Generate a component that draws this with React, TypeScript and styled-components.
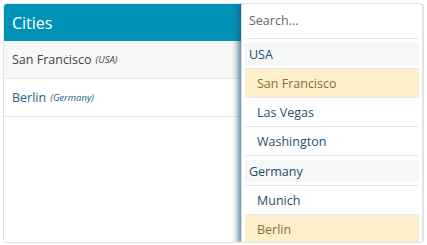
import React, { useState } from 'react';
import styled, { createGlobalStyle } from 'styled-components';

const GlobalStyle = createGlobalStyle`
    html, body {
        margin: 0;
        padding: 0;
        background: #ffffff;
        font-family: "Open Sans", "Noto Sans", sans-serif;
        overflow: hidden;
    }
`;

const Page = styled.div`
    width: 427px;
    height: 245px;
    padding: 3px 3px 4px 3px;
    box-sizing: border-box;
`;

const Card = styled.div`
    position: relative;
    height: 100%;
    border: 1px solid #dfe3e6;
    border-radius: 4px;
    overflow: hidden;
    background: #fff;
`;

const Header = styled.div`
    height: 37px;
    background: #0093b5;
    color: #fff;
    font-size: 16px;
    display: flex;
    align-items: center;
    padding: 0 8px;
`;

const Row = styled.div<{ $shaded?: boolean; $active?: boolean }>`
    height: 37px;
    display: flex;
    align-items: center;
    gap: 4px;
    padding: 0 8px;
    font-size: 12.5px;
    color: ${(p) => (p.$active ? '#236283' : '#444')};
    background: ${(p) => (p.$shaded ? '#f7f7f7' : '#fff')};
    border-bottom: 1px solid #e4e8ea;

    &:last-of-type {
        border-bottom: none;
    }
`;

const Country = styled.span`
    font-size: 9.5px;
    font-style: italic;
`;

const Dropdown = styled.div`
    position: absolute;
    top: -2px;
    right: 0;
    width: 182px;
    bottom: -4px;
    background: #fff;
    border: 1px solid #dfe3e6;
    border-radius: 4px;
    box-shadow: -4px 0 6px -1px rgba(20, 90, 130, 0.75);
    padding: 0 3px;
    box-sizing: border-box;
`;

const Search = styled.input`
    display: block;
    width: 100%;
    height: 36px;
    box-sizing: border-box;
    border: none;
    border-bottom: 1px solid #e4e8ea;
    outline: none;
    padding: 0 4px;
    font-family: inherit;
    font-size: 12.5px;
    color: #333;

    &::placeholder {
        color: #666;
    }
`;

const Section = styled.div`
    margin-top: 4px;
`;

const Group = styled.div`
    height: 22px;
    background: #f6f7f7;
    display: flex;
    align-items: center;
    padding: 0 4px;
    font-size: 12.5px;
    color: #1f4f6e;
`;

const List = styled.div`
    margin-top: 3px;
    border-bottom: 1px solid #e4e8ea;
`;

const Item = styled.div<{ $selected?: boolean }>`
    height: 28px;
    display: flex;
    align-items: center;
    padding: 0 12px;
    font-size: 12.5px;
    color: ${(p) => (p.$selected ? '#8a6d3b' : '#1f4f6e')};
    background: ${(p) => (p.$selected ? '#fcefc9' : '#fff')};
    border-top: 1px solid #e4e8ea;
`;

const groups = [
    { name: 'USA', cities: ['San Francisco', 'Las Vegas', 'Washington'] },
    { name: 'Germany', cities: ['Munich', 'Berlin'] },
];

const selected = ['San Francisco', 'Berlin'];

export default function App() {
    const [query, setQuery] = useState('');

    return (
        <>
            <GlobalStyle />
            <Page>
                <Card>
                    <Header>Cities</Header>
                    <Row $shaded>
                        San Francisco <Country>(USA)</Country>
                    </Row>
                    <Row $active>
                        Berlin <Country>(Germany)</Country>
                    </Row>
                    <Dropdown>
                        <Search
                            placeholder="Search..."
                            value={query}
                            onChange={(e) => setQuery(e.target.value)}
                        />
                        {groups.map((g) => (
                            <Section key={g.name}>
                                <Group>{g.name}</Group>
                                <List>
                                    {g.cities.map((c) => (
                                        <Item key={c} $selected={selected.includes(c)}>
                                            {c}
                                        </Item>
                                    ))}
                                </List>
                            </Section>
                        ))}
                    </Dropdown>
                </Card>
            </Page>
        </>
    );
}
